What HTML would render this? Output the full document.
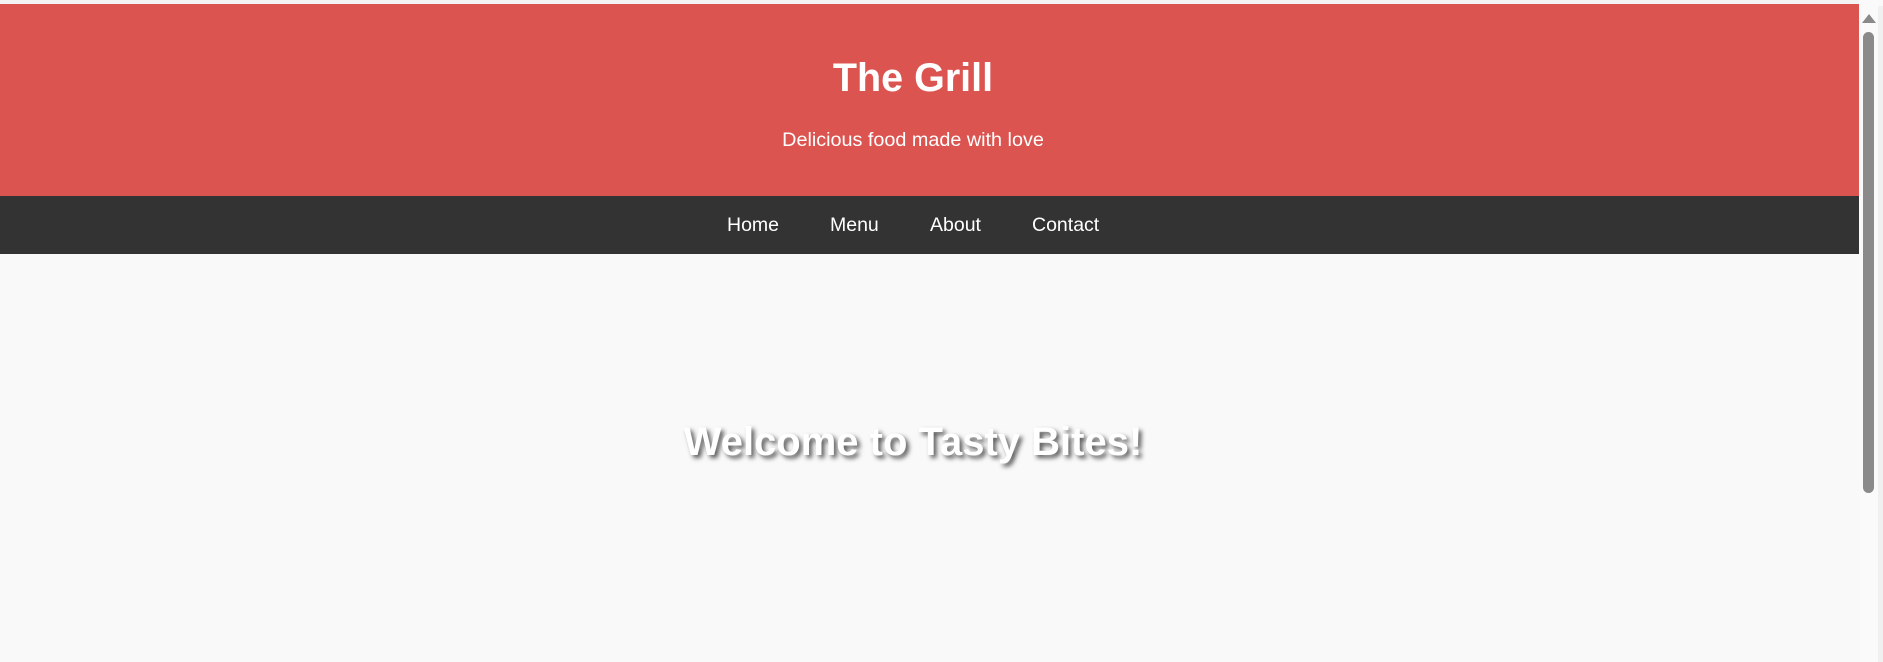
<!DOCTYPE html>
<html><head><meta charset="utf-8"><style>
html,body{margin:0;padding:0;width:1883px;height:662px;overflow:hidden;background:#f9f9f9;font-family:"Liberation Sans",Arial,sans-serif;}
.top{position:absolute;left:0;top:0;width:1859px;height:4px;background:#f3f3f3;}
.hdr{position:absolute;left:0;top:4px;width:1859px;height:192px;background:#db5450;}
.nav{position:absolute;left:0;top:196px;width:1859px;height:58px;background:#333;}
.c{position:absolute;left:0;width:1826px;text-align:center;color:#fff;white-space:nowrap;}
.t{top:58.5px;font-size:39.5px;line-height:39.5px;font-weight:bold;}
.s{top:130.5px;font-size:19.8px;line-height:19.8px;}
.n{position:absolute;top:216px;font-size:19.5px;line-height:19.5px;color:#fff;}
.w{top:421.5px;font-size:40px;line-height:40px;font-weight:bold;text-shadow:3px 3px 5px rgba(0,0,0,.65);}
.sb{position:absolute;left:1859px;top:0;width:24px;height:662px;background:#fafafa;border-top-right-radius:10px;}
.sb2{position:absolute;left:1878px;top:6px;width:5px;height:656px;background:#f0f0f0;}
.thumb{position:absolute;left:1863px;top:32px;width:11px;height:461px;background:#8a8a8a;border-radius:6px;}
.arr{position:absolute;left:1862px;top:14px;width:0;height:0;border-left:7px solid transparent;border-right:7px solid transparent;border-bottom:9px solid #8a8a8a;}
</style></head><body>
<div class="top"></div>
<div class="hdr"></div>
<div class="nav"></div>
<div class="c t">The Grill</div>
<div class="c s">Delicious food made with love</div>
<div class="n" style="left:727px">Home</div>
<div class="n" style="left:830px">Menu</div>
<div class="n" style="left:930px">About</div>
<div class="n" style="left:1032px">Contact</div>
<div class="c w">Welcome to Tasty Bites!</div>
<div class="sb"></div><div class="sb2"></div>
<div class="arr"></div>
<div class="thumb"></div>
</body></html>
